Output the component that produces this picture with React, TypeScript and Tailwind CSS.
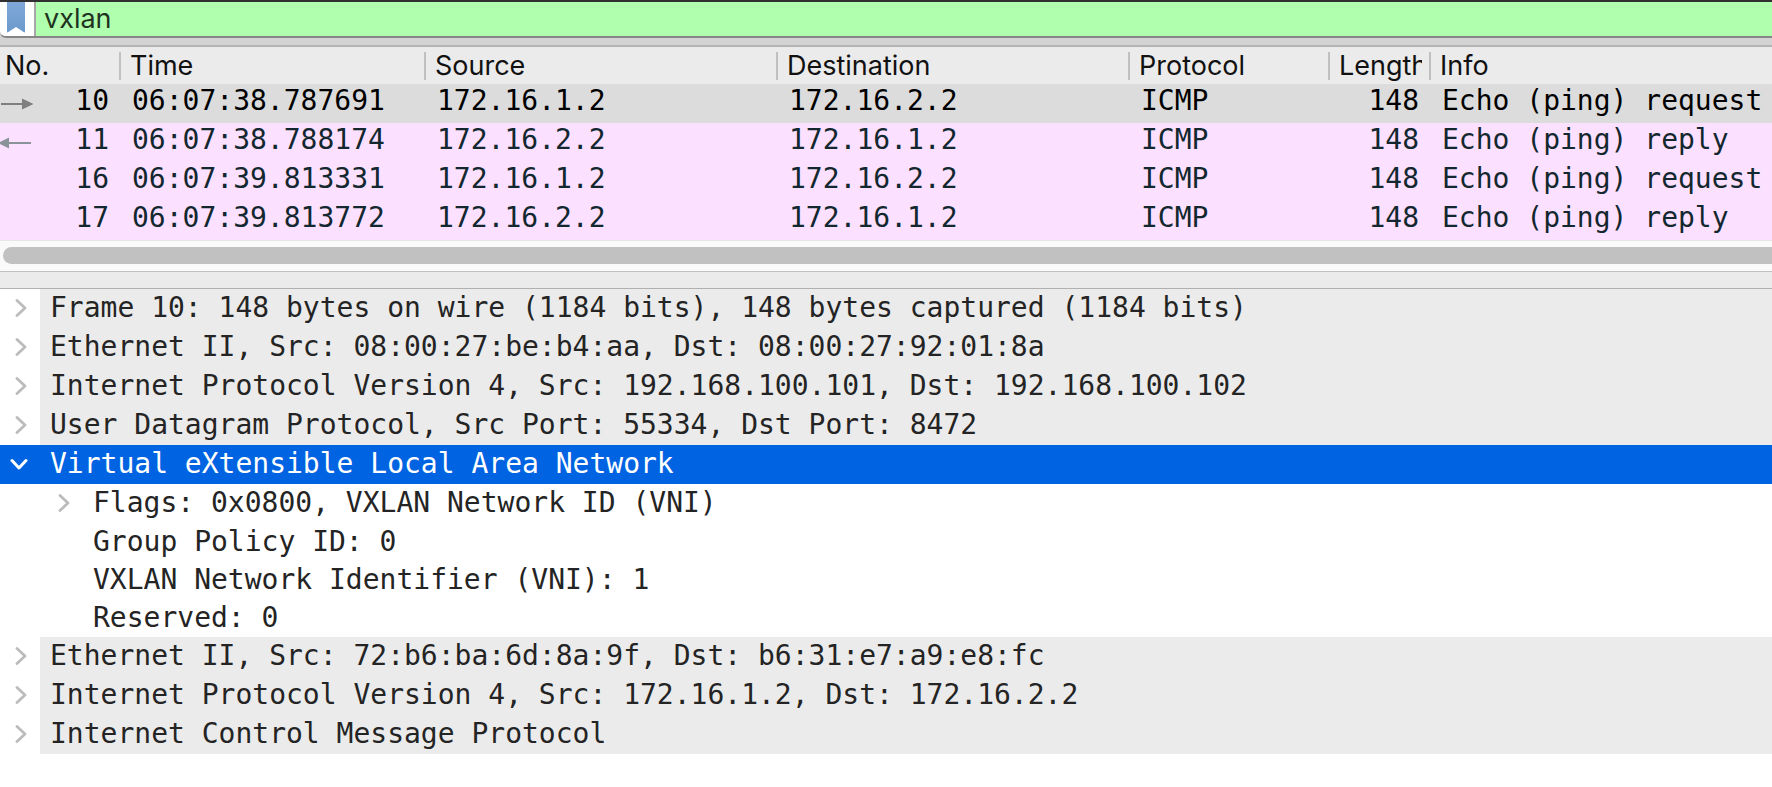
import React, { useState } from 'react';
import clsx from 'clsx';

interface Packet {
  no: number;
  time: string;
  source: string;
  destination: string;
  protocol: string;
  length: number;
  info: string;
  direction?: 'request' | 'reply';
}

interface TreeNode {
  id: string;
  label: string;
  expandable?: boolean;
  children?: TreeNode[];
}

const PACKETS: Packet[] = [
  { no: 10, time: '06:07:38.787691', source: '172.16.1.2', destination: '172.16.2.2', protocol: 'ICMP', length: 148, info: 'Echo (ping) request', direction: 'request' },
  { no: 11, time: '06:07:38.788174', source: '172.16.2.2', destination: '172.16.1.2', protocol: 'ICMP', length: 148, info: 'Echo (ping) reply', direction: 'reply' },
  { no: 16, time: '06:07:39.813331', source: '172.16.1.2', destination: '172.16.2.2', protocol: 'ICMP', length: 148, info: 'Echo (ping) request' },
  { no: 17, time: '06:07:39.813772', source: '172.16.2.2', destination: '172.16.1.2', protocol: 'ICMP', length: 148, info: 'Echo (ping) reply' },
];

const COLUMNS = [
  { title: 'No.', width: 'w-[121px]', pad: 'pl-[5px]' },
  { title: 'Time', width: 'w-[305px]', pad: 'pl-[9px]' },
  { title: 'Source', width: 'w-[352px]', pad: 'pl-[9px]' },
  { title: 'Destination', width: 'w-[352px]', pad: 'pl-[9px]' },
  { title: 'Protocol', width: 'w-[200px]', pad: 'pl-[9px]' },
  { title: 'Length', width: 'w-[101px]', pad: 'pl-[9px]' },
  { title: 'Info', width: '', pad: 'pl-[9px]' },
];

const DETAILS: TreeNode[] = [
  { id: 'frame', label: 'Frame 10: 148 bytes on wire (1184 bits), 148 bytes captured (1184 bits)', expandable: true },
  { id: 'eth-outer', label: 'Ethernet II, Src: 08:00:27:be:b4:aa, Dst: 08:00:27:92:01:8a', expandable: true },
  { id: 'ip-outer', label: 'Internet Protocol Version 4, Src: 192.168.100.101, Dst: 192.168.100.102', expandable: true },
  { id: 'udp', label: 'User Datagram Protocol, Src Port: 55334, Dst Port: 8472', expandable: true },
  {
    id: 'vxlan',
    label: 'Virtual eXtensible Local Area Network',
    expandable: true,
    children: [
      { id: 'flags', label: 'Flags: 0x0800, VXLAN Network ID (VNI)', expandable: true },
      { id: 'policy', label: 'Group Policy ID: 0' },
      { id: 'vni', label: 'VXLAN Network Identifier (VNI): 1' },
      { id: 'reserved', label: 'Reserved: 0' },
    ],
  },
  { id: 'eth-inner', label: 'Ethernet II, Src: 72:b6:ba:6d:8a:9f, Dst: b6:31:e7:a9:e8:fc', expandable: true },
  { id: 'ip-inner', label: 'Internet Protocol Version 4, Src: 172.16.1.2, Dst: 172.16.2.2', expandable: true },
  { id: 'icmp', label: 'Internet Control Message Protocol', expandable: true },
];

const Bookmark = () => (
  <svg width="18" height="31" viewBox="0 0 18 31" aria-hidden="true">
    <defs>
      <linearGradient id="bookmark" x1="0" y1="0" x2="0" y2="1">
        <stop offset="0" stopColor="#7fa8d8" />
        <stop offset="1" stopColor="#6b9acb" />
      </linearGradient>
    </defs>
    <path d="M0 0H18V29.5Q18 31 16.6 30.1L9 25L1.4 30.1Q0 31 0 29.5Z" fill="url(#bookmark)" />
  </svg>
);

const DirectionArrow = ({ direction }: { direction: 'request' | 'reply' }) =>
  direction === 'request' ? (
    <svg width="34" height="12" viewBox="0 0 34 12" className="mt-1.5" aria-hidden="true">
      <path d="M1 6H23" stroke="#7f7f7f" strokeWidth="2" />
      <path d="M22 0.5L33.5 6L22 11.5Z" fill="#7f7f7f" />
    </svg>
  ) : (
    <svg width="34" height="12" viewBox="0 0 34 12" className="mt-1.5" aria-hidden="true">
      <path d="M8 6H31" stroke="#8a9397" strokeWidth="2" />
      <path d="M9 0.5L-2 6L9 11.5Z" fill="#8a9397" />
    </svg>
  );

const Chevron = ({ open }: { open: boolean }) =>
  open ? (
    <svg width="18" height="18" viewBox="0 0 18 18" aria-hidden="true">
      <path d="M2 5.5L9 13L16 5.5" fill="none" stroke="currentColor" strokeWidth="3" strokeLinecap="round" strokeLinejoin="round" />
    </svg>
  ) : (
    <svg width="18" height="18" viewBox="0 0 18 18" aria-hidden="true">
      <path d="M7 1.5L15 9L7 16.5" fill="none" stroke="currentColor" strokeWidth="2.8" strokeLinecap="round" strokeLinejoin="round" />
    </svg>
  );

interface TreeRowProps {
  node: TreeNode;
  level: number;
  open: boolean;
  selected: boolean;
  onToggle: () => void;
  onSelect: () => void;
}

const TreeRow: React.FC<TreeRowProps> = ({ node, level, open, selected, onToggle, onSelect }) => (
  <div
    onClick={onSelect}
    className={clsx(
      'flex whitespace-pre leading-[37px]',
      level === 1 && 'pl-[43px]',
      node.expandable ? 'h-[39px]' : 'h-[38px]',
      selected ? 'bg-[#0063e1] text-white' : 'text-[#242424]'
    )}
  >
    <div className="w-10 shrink-0 flex items-center">
      {node.expandable && (
        <button
          type="button"
          aria-label={`Toggle ${node.label}`}
          onClick={onToggle}
          className={clsx('pb-px pl-[10px]', selected ? 'text-white' : 'text-[#bcbcbc]')}
        >
          <Chevron open={open} />
        </button>
      )}
    </div>
    <span className={clsx('grow pl-[10px]', level === 0 && !selected && 'bg-[#ebebeb]')}>{node.label}</span>
  </div>
);

export default function App() {
  const [filter, setFilter] = useState('vxlan');
  const [activePacket, setActivePacket] = useState(10);
  const [selected, setSelected] = useState('vxlan');
  const [opened, setOpened] = useState<string[]>(['vxlan']);

  const toggle = (id: string) =>
    setOpened((prev) => (prev.includes(id) ? prev.filter((x) => x !== id) : [...prev, id]));

  const renderNode = (node: TreeNode, level: number): React.ReactNode => {
    const open = opened.includes(node.id) && !!node.children;
    return (
      <li key={node.id}>
        <TreeRow
          node={node}
          level={level}
          open={open}
          selected={selected === node.id}
          onToggle={() => toggle(node.id)}
          onSelect={() => setSelected(node.id)}
        />
        {open && <ul>{node.children?.map((child) => renderNode(child, level + 1))}</ul>}
      </li>
    );
  };

  return (
    <div className="min-h-screen bg-white overflow-hidden">
      {/* Display filter */}
      <div className="bg-[#d3d3d3] border-t-2 border-[#303030] pb-[7px]">
        <div className="flex h-9 bg-white border-b-2 border-[#868686] rounded-bl-md">
          <button type="button" aria-label="Bookmark this filter" className="w-9 shrink-0 flex items-start pl-[7px] border-r-2 border-[#a6a6a6]">
            <Bookmark />
          </button>
          <label htmlFor="display-filter" className="sr-only">Display filter</label>
          <input
            id="display-filter"
            type="text"
            value={filter}
            onChange={(e) => setFilter(e.target.value)}
            spellCheck={false}
            className="grow min-w-0 bg-[#afffaf] pl-2 pb-px outline-none text-[27px] leading-[33px] text-[#1f3320] font-[Inter,sans-serif]"
          />
        </div>
      </div>

      {/* Packet list */}
      <table className="w-full table-fixed border-collapse whitespace-pre">
        <colgroup>
          {COLUMNS.map((col) => (
            <col key={col.title} className={col.width} />
          ))}
        </colgroup>
        <thead className="bg-[#ebebeb] text-[#111] font-[Inter,sans-serif] text-[27px] leading-[37px]">
          <tr>
            {COLUMNS.map((col, i) => (
              <th key={col.title} scope="col" className="p-0 border-t-2 border-[#b4b4b4] text-left font-normal">
                <div className={clsx('flex items-center gap-[7px]', col.pad)}>
                  <span className="grow min-w-0 overflow-hidden">{col.title}</span>
                  {i < COLUMNS.length - 1 && <span className="w-0.5 h-7 shrink-0 bg-[#c0c0c0]"></span>}
                </div>
              </th>
            ))}
          </tr>
        </thead>
        <tbody className="font-['DejaVu_Sans_Mono',monospace] text-[28px] leading-[33px]">
          {PACKETS.map((packet) => (
            <tr
              key={packet.no}
              onClick={() => setActivePacket(packet.no)}
              className={packet.no === activePacket ? 'bg-[#dcdcdc] text-black' : 'bg-[#fce0ff] text-[#12272e]'}
            >
              <td className="p-0 pb-1.5 pr-3">
                <div className="flex items-center justify-between">
                  <span>{packet.direction && <DirectionArrow direction={packet.direction} />}</span>
                  <span>{packet.no}</span>
                </div>
              </td>
              <td className="p-0 pb-1.5 pl-[11px]">{packet.time}</td>
              <td className="p-0 pb-1.5 pl-[11px]">{packet.source}</td>
              <td className="p-0 pb-1.5 pl-[11px]">{packet.destination}</td>
              <td className="p-0 pb-1.5 pl-[11px]">{packet.protocol}</td>
              <td className="p-0 pb-1.5 pr-3 text-right">{packet.length}</td>
              <td className="p-0 pb-1.5 pl-[11px]">{packet.info}</td>
            </tr>
          ))}
        </tbody>
      </table>

      {/* Horizontal scroll track */}
      <div className="bg-[#fafafa] border-t border-[#e6e6e6] pt-1.5 pb-[7px] pl-[3px]">
        <div className="h-[17px] rounded-l-full bg-[#c1c1c1]"></div>
      </div>

      {/* Splitter */}
      <div className="h-[18px] bg-[#ebebeb] border-y border-t-[#c0c0c0] border-b-[#b0b0b0]"></div>

      {/* Packet details */}
      <ul className="font-['DejaVu_Sans_Mono',monospace] text-[28px]">
        {DETAILS.map((node) => renderNode(node, 0))}
      </ul>
    </div>
  );
}
